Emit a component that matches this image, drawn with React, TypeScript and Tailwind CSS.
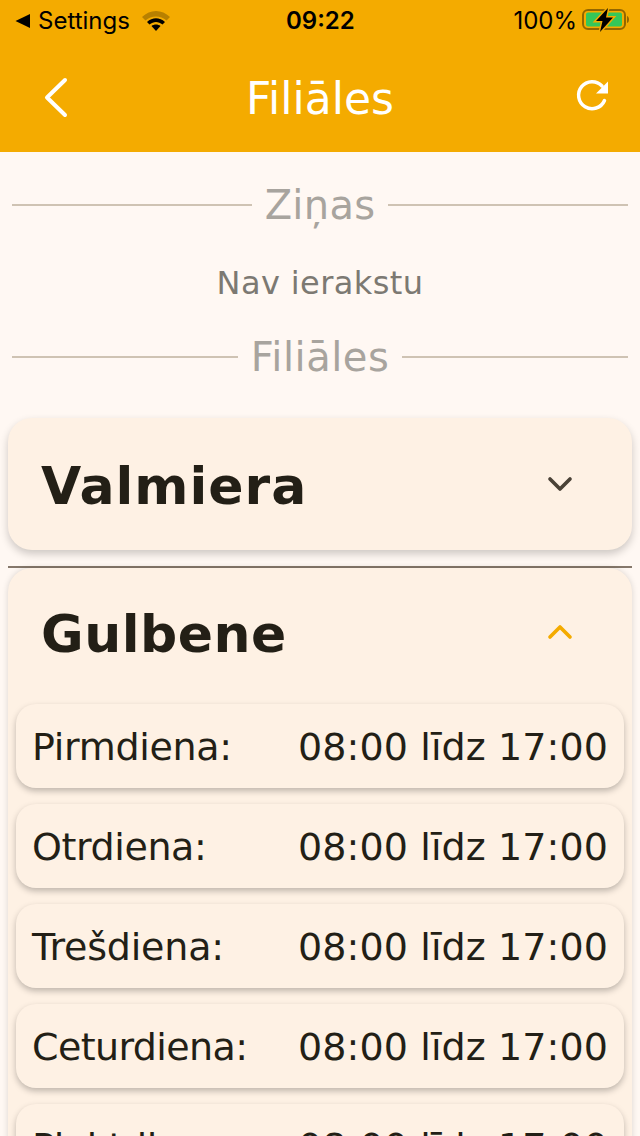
import React from 'react';
import { ChevronDown, ChevronUp } from 'lucide-react';

const hours = [
  { day: 'Pirmdiena:', time: '08:00 līdz 17:00', track: 'tracking-[-0.3px]' },
  { day: 'Otrdiena:', time: '08:00 līdz 17:00', track: 'tracking-[-0.4px]' },
  { day: 'Trešdiena:', time: '08:00 līdz 17:00', track: 'tracking-[-0.2px]' },
  { day: 'Ceturdiena:', time: '08:00 līdz 17:00', track: 'tracking-[-0.6px]' },
  { day: 'Piektdiena:', time: '08:00 līdz 17:00', track: 'tracking-[-0.4px]' },
];

const StatusBar: React.FC = () => (
  <div className="relative h-[42px] flex items-center justify-between pl-[15px] pr-[9px] font-['Inter',sans-serif] text-[24px] text-black">
    <div className="flex items-center">
      <svg width="16" height="16" viewBox="0 0 16 16" className="mr-[7px]">
        <path d="M15 1V15L0.500 8Z" fill="#000" />
      </svg>
      <span className="leading-none">Settings</span>
      <svg width="30" height="22" viewBox="0 0 30 22" className="ml-[11px]">
        <path d="M1 7C9 -1 21 -1 29 7L25.500 10.500C19.500 5 10.500 5 4.500 10.500Z" fill="#000" fillOpacity="0.25" />
        <path d="M6 12C11.500 7 18.500 7 24 12L21.500 14.500C17.500 11 12.500 11 8.500 14.500Z" fill="#000" />
        <path d="M10.500 16C13 14 17 14 19.500 16L15 21Z" fill="#000" />
      </svg>
    </div>
    <span className="absolute left-[286px] top-[7px] font-semibold leading-[28px]">09:22</span>
    <div className="flex items-center">
      <span className="leading-none">100%</span>
      <svg width="50" height="26" viewBox="0 0 50 26" className="ml-[4px]">
        <rect x="2" y="2" width="42" height="19" rx="5" fill="none" stroke="#000" strokeOpacity="0.4" strokeWidth="2" />
        <rect x="5" y="4.500" width="36" height="14" rx="2" fill="#34c759" />
        <path d="M46 8V15C47.500 14.500 48 13 48 11.500S47.500 8.500 46 8Z" fill="#000" fillOpacity="0.4" />
        <path d="M27 0L15 13H21.500L19 24L32 9.500H25Z" fill="#f4ab00" stroke="#f4ab00" strokeWidth="3" />
        <path d="M27 0L15 13H21.500L19 24L32 9.500H25Z" fill="#000" />
      </svg>
    </div>
  </div>
);

const Divider: React.FC<{ label: string; track: string }> = ({ label, track }) => (
  <div className="flex items-center gap-[13px] px-[12px]">
    <div className="flex-1 h-[2px] bg-[#cfc3b3]" />
    <span className={`text-[40px] leading-[44px] text-[#a8a49e] ${track}`}>{label}</span>
    <div className="flex-1 h-[2px] bg-[#cfc3b3]" />
  </div>
);

export default function App() {
  return (
    <div className="h-[1136px] w-[640px] overflow-hidden bg-[#fff8f3] font-['DejaVu_Sans',sans-serif] text-[#231f16]">
      <header className="h-[152px] bg-[#f4ab00]">
        <StatusBar />
        <div className="relative flex items-center justify-center h-[110px]">
          <svg width="30" height="44" viewBox="0 0 30 44" fill="none" className="absolute left-[41px] top-[33px]">
            <polyline points="24,5 6,22.500 24,40" stroke="#fff" strokeWidth="4" strokeLinecap="round" strokeLinejoin="round" />
          </svg>
          <h1 className="pt-[4px] text-[44px] leading-none text-white">Filiāles</h1>
          <svg width="36" height="36" viewBox="0 0 36 36" className="absolute left-[575px] top-[36px]" fill="none">
            <path d="M29.500 22.500A13.500 13.500 0 1 1 27 8" stroke="#fff" strokeWidth="3.500" strokeLinecap="round" />
            <path d="M33 3.500V15.500H21Z" fill="#fff" />
          </svg>
        </div>
      </header>

      <div className="pt-[31px]">
        <Divider label="Ziņas" track="tracking-[0.3px]" />
        <p className="mt-[38px] text-center text-[32px] leading-[36px] tracking-[0.4px] text-[#7c7972]">Nav ierakstu</p>
        <div className="mt-[34px]">
          <Divider label="Filiāles" track="tracking-[0.5px]" />
        </div>
      </div>

      <div className="mt-[39px] px-[8px]">
        <div className="flex items-center justify-between h-[132px] rounded-[24px] bg-[#fef1e4] shadow-[0_4px_8px_rgba(0,0,0,0.2)] pl-[33px] pr-[52px]">
          <span className="pt-[4px] text-[52px] font-bold leading-none tracking-[1px]">Valmiera</span>
          <ChevronDown className="text-[#4a4237]" size={40} strokeWidth={2.2} />
        </div>
        <div className="mt-[16px] h-[2px] bg-[#86786b]" />
        <div className="rounded-t-[24px] bg-[#fef1e4] shadow-[0_0_6px_rgba(0,0,0,0.15)] h-[600px] px-[8px]">
          <div className="flex items-center justify-between h-[136px] pb-[4px] pl-[25px] pr-[44px]">
            <span className="text-[52px] font-bold leading-none tracking-[0.5px]">Gulbene</span>
            <ChevronUp className="mb-[5px] text-[#f4ab00]" size={40} strokeWidth={2.2} />
          </div>
          <div className="flex flex-col gap-[16px]">
            {hours.map((row) => (
              <div key={row.day} className="flex items-center justify-between h-[84px] rounded-[20px] bg-[#fef1e4] shadow-[0_3px_6px_rgba(0,0,0,0.25)] pl-[16px] pr-[16px] pt-[2px] text-[38px] leading-none">
                <span className={row.track}>{row.day}</span>
                <span className="tracking-[0.1px]">{row.time}</span>
              </div>
            ))}
          </div>
        </div>
      </div>
    </div>
  );
}
